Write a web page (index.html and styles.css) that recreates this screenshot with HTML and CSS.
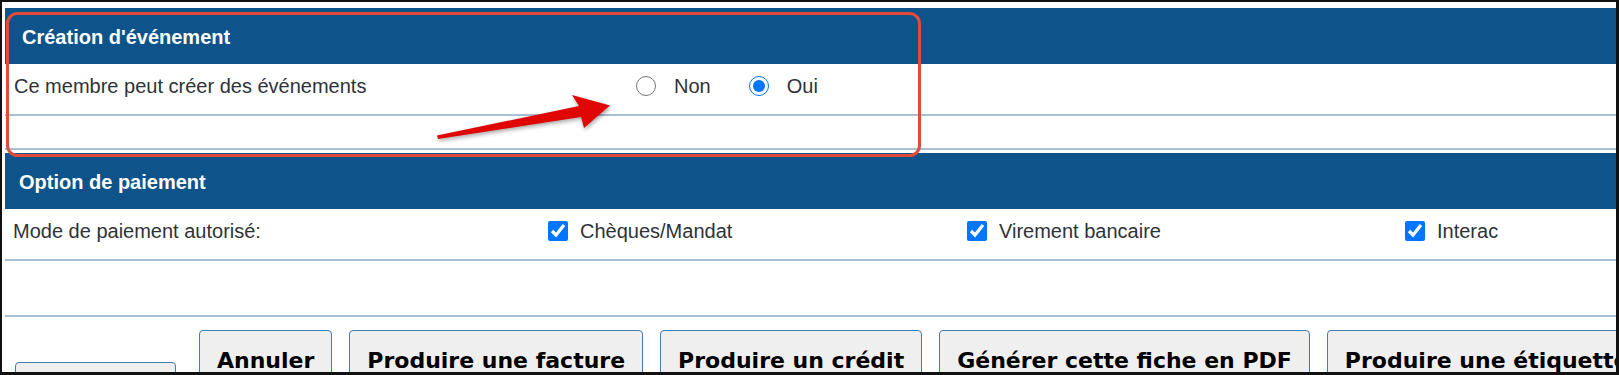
FILE: index.html
```html
<!DOCTYPE html>
<html lang="fr">
<head>
    <meta charset="UTF-8">
    <meta name="viewport" content="width=device-width, initial-scale=1.0">
    <title>Fiche membre - options</title>
    <link rel="stylesheet" href="styles.css">
</head>
<body>

<div class="screen">

    <section class="panel panel-event">
        <h3 class="panel-title">Création d'événement</h3>
        <div class="panel-row row-event">
            <span class="row-label">Ce membre peut créer des événements</span>
            <div class="choices">
                <label class="choice"><input type="radio" name="event" value="0"> Non</label>
                <label class="choice"><input type="radio" name="event" value="1" checked> Oui</label>
            </div>
        </div>
        <div class="panel-row row-empty"></div>
    </section>

    <section class="panel panel-pay">
        <h3 class="panel-title">Option de paiement</h3>
        <div class="panel-row row-pay">
            <span class="row-label">Mode de paiement autorisé:</span>
            <label class="check"><input type="checkbox" checked> Chèques/Mandat</label>
            <label class="check"><input type="checkbox" checked> Virement bancaire</label>
            <label class="check"><input type="checkbox" checked> Interac</label>
        </div>
        <div class="panel-row row-empty tall"></div>
    </section>

    <div class="actions">
        <button class="btn btn-low" type="button">&nbsp;</button>
        <button class="btn" type="button">Annuler</button>
        <button class="btn" type="button">Produire une facture</button>
        <button class="btn" type="button">Produire un crédit</button>
        <button class="btn" type="button">Générer cette fiche en PDF</button>
        <button class="btn" type="button">Produire une étiquette</button>
    </div>

    <!-- annotations drawn over the capture -->
    <svg class="markup" width="1619" height="375" viewBox="0 0 1619 375">
        <rect class="markup-box" x="7.5" y="13.5" width="912" height="142" rx="10" ry="10"></rect>
        <polygon class="markup-arrow" points="437,135.5 579,106 572,95 610,105.5 584,128 581,117 438,139"></polygon>
    </svg>

</div>

</body>
</html>
```

FILE: styles.css
```css
body {
    margin: 0;
    font-family: 'Liberation Sans', Arial, sans-serif;
    font-size: 20px;
    color: #2e3338;
    background-color: #fff;
}

.screen {
    position: relative;
    width: 1619px;
    height: 375px;
    box-sizing: border-box;
    border: solid #111;
    border-width: 2px 3px 3px 2px;
    padding: 6px 0 0 3px;
    overflow: hidden;
    background-color: #fff;
}

/* Panels */
.panel-title {
    margin: 0;
    height: 56px;
    box-sizing: border-box;
    padding: 18px 17px 16px;
    background-color: #0e538a;
    color: #fff;
    font-size: 20px;
    line-height: 22px;
    font-weight: bold;
}

.panel-pay .panel-title {
    padding-left: 14px;
}

.panel-event {
    margin-bottom: 3px;
}

.panel-row {
    display: flex;
    align-items: center;
    height: 52px;
    box-sizing: border-box;
    padding: 0 0 6px 9px;
    line-height: 22px;
    border-bottom: 2px solid #a9bfd4;
}

.row-empty {
    height: 34px;
    padding: 0;
}

.row-empty.tall {
    height: 56px;
}

.row-event .row-label {
    width: 622px;
}

.row-pay {
    padding-left: 8px;
}

.row-pay .row-label {
    width: 535px;
}

.choices {
    display: flex;
    align-items: center;
}

.choice,
.check {
    display: flex;
    align-items: center;
}

.choice input {
    width: 20px;
    height: 20px;
    margin: 0 18px 0 0;
}

.choice + .choice {
    margin-left: 38px;
}

.check input {
    width: 20px;
    height: 20px;
    margin: 0 12px 0 0;
}

.check:nth-of-type(1) {
    width: 419px;
}

.check:nth-of-type(2) {
    width: 438px;
}

/* Buttons */
.actions {
    display: flex;
    align-items: flex-start;
    gap: 17px;
    margin-top: 13px;
    padding-left: 10px;
}

.btn {
    flex-shrink: 0;
    height: 62px;
    padding: 12px 17px;
    box-sizing: border-box;
    border: 1px solid #3f7cb8;
    border-radius: 4px;
    background-color: #efefef;
    color: #000;
    font-family: 'DejaVu Sans', Verdana, sans-serif;
    font-size: 22px;
    font-weight: bold;
    line-height: 26px;
    white-space: nowrap;
    text-align: left;
}

.btn-low {
    width: 161px;
    margin-top: 32px;
    margin-right: 6px;
}

/* Annotations */
.markup {
    position: absolute;
    top: -2px;
    left: -2px;
    pointer-events: none;
}

.markup-box {
    fill: none;
    stroke: #e24a3a;
    stroke-width: 3;
}

.markup-arrow {
    fill: #e00606;
    filter: drop-shadow(1px 2px 2px rgba(0, 0, 0, 0.35));
}
```
